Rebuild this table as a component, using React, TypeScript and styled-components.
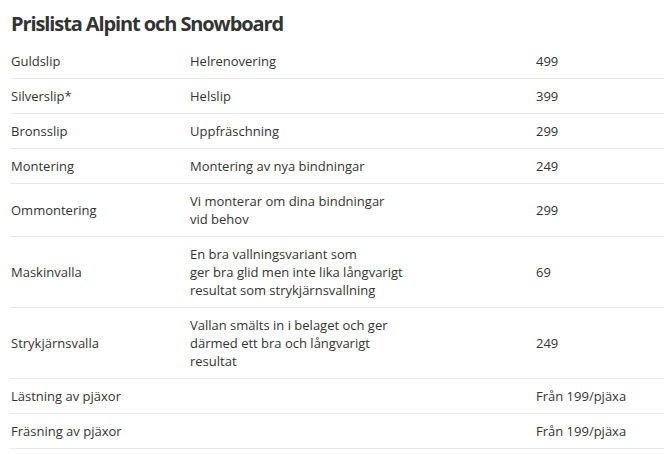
import React from "react";
import styled, { createGlobalStyle } from "styled-components";

const Global = createGlobalStyle`
  html, body { margin: 0; padding: 0; background: #fff; }
  body { font-family: "Open Sans", "Liberation Sans", sans-serif; color: #333; }
`;

const Page = styled.div`
  padding: 0 0 0 10px;
`;

const Title = styled.h1`
  margin: 10px 0 6px;
  padding-left: 1px;
  font-size: 20px;
  line-height: 28px;
  font-weight: 700;
  letter-spacing: -1.1px;
  color: #333;
`;

const Table = styled.table`
  width: 100%;
  border-collapse: collapse;
  font-size: 13px;
  line-height: 18px;
  color: #333;
`;

const Row = styled.tr`
  border-bottom: 1px solid #e8e8e8;
`;

const Cell = styled.td<{ $w?: number }>`
  padding: 8px 0 8px 1px;
  vertical-align: middle;
  text-align: left;
  ${(p) => (p.$w ? `width: ${p.$w}px;` : "")}
`;

type Item = { name: string; desc: string[]; price: string };

const items: Item[] = [
  { name: "Guldslip", desc: ["Helrenovering"], price: "499" },
  { name: "Silverslip*", desc: ["Helslip"], price: "399" },
  { name: "Bronsslip", desc: ["Uppfräschning"], price: "299" },
  { name: "Montering", desc: ["Montering av nya bindningar"], price: "249" },
  { name: "Ommontering", desc: ["Vi monterar om dina bindningar", "vid behov"], price: "299" },
  {
    name: "Maskinvalla",
    desc: ["En bra vallningsvariant som", "ger bra glid men inte lika långvarigt", "resultat som strykjärnsvallning"],
    price: "69",
  },
  {
    name: "Strykjärnsvalla",
    desc: ["Vallan smälts in i belaget och ger", "därmed ett bra och långvarigt", "resultat"],
    price: "249",
  },
  { name: "Lästning av pjäxor", desc: [""], price: "Från 199/pjäxa" },
  { name: "Fräsning av pjäxor", desc: [""], price: "Från 199/pjäxa" },
];

export default function App() {
  return (
    <Page>
      <Global />
      <Title>Prislista Alpint och Snowboard</Title>
      <Table>
        <tbody>
          {items.map((it) => (
            <Row key={it.name}>
              <Cell $w={178}>{it.name}</Cell>
              <Cell $w={345}>
                {it.desc.map((d, i) => (
                  <React.Fragment key={i}>
                    {i > 0 && <br />}
                    {d}
                  </React.Fragment>
                ))}
              </Cell>
              <Cell>{it.price}</Cell>
            </Row>
          ))}
        </tbody>
      </Table>
    </Page>
  );
}
